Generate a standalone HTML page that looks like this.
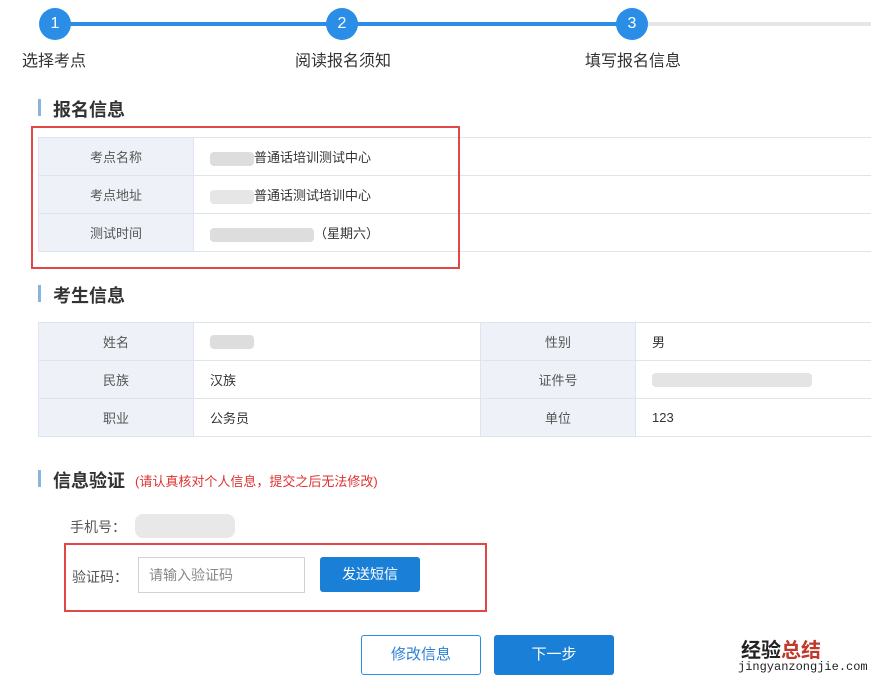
<!DOCTYPE html><html><head><meta charset="utf-8"><style>
body{margin:0;width:871px;height:685px;background:#fff;position:relative;overflow:hidden;font-family:"Liberation Sans","Noto Sans CJK SC",sans-serif;color:#333}
.a{position:absolute}
.c{position:absolute;width:32px;height:32px;border-radius:50%;background:#2b8ee6;color:#fff;font-size:16px;text-align:center;line-height:32px;top:8px}
.sl{position:absolute;top:47px;font-size:16px;color:#333}
.h{position:absolute;left:53px;font-size:18px;font-weight:bold;color:#333}
.bar{position:absolute;left:38px;width:3px;height:17px;background:#8ab4e0}
table{position:absolute;border-collapse:collapse;font-size:13px;left:38px}
td{border:1px solid #dde4ee;height:37px;padding:0}
td.l{background:#eef2f8;text-align:center;width:154px;color:#555}
td.v{padding-left:16px}
.bl{display:inline-block;background:#ddd;border-radius:4px;vertical-align:middle;height:14px}
.red{position:absolute;border:2px solid #e04848}
.btn{position:absolute;font-size:15px;text-align:center;border-radius:3px}
</style></head><body>
<div class="a" style="left:55px;top:22px;width:577px;height:4px;background:#2b8ee6"></div>
<div class="a" style="left:632px;top:22px;width:239px;height:4px;background:#e6e6e6"></div>
<div class="c" style="left:39px">1</div><div class="c" style="left:326px">2</div><div class="c" style="left:616px">3</div>
<div class="sl" style="left:22px">选择考点</div><div class="sl" style="left:295px">阅读报名须知</div><div class="sl" style="left:585px">填写报名信息</div>

<div class="bar" style="top:99px"></div><div class="h" style="top:96px">报名信息</div>
<table style="top:137px;width:840px">
<tr><td class="l">考点名称</td><td class="v"><span class="bl" style="width:44px"></span>普通话培训测试中心</td></tr>
<tr><td class="l">考点地址</td><td class="v"><span class="bl" style="width:44px;background:#e6e6e6"></span>普通话测试培训中心</td></tr>
<tr><td class="l">测试时间</td><td class="v"><span class="bl" style="width:104px"></span>（星期六）</td></tr>
</table>
<div class="red" style="left:31px;top:126px;width:425px;height:139px"></div>

<div class="bar" style="top:285px"></div><div class="h" style="top:282px">考生信息</div>
<table style="top:322px;width:840px">
<tr><td class="l">姓名</td><td class="v" style="width:270px"><span class="bl" style="width:44px"></span></td><td class="l">性别</td><td class="v">男</td></tr>
<tr><td class="l">民族</td><td class="v">汉族</td><td class="l">证件号</td><td class="v"><span class="bl" style="width:160px;background:#e4e4e4"></span></td></tr>
<tr><td class="l">职业</td><td class="v">公务员</td><td class="l">单位</td><td class="v">123</td></tr>
</table>

<div class="bar" style="top:470px"></div><div class="h" style="top:467px">信息验证</div>
<div class="a" style="left:135px;top:471px;font-size:13px;color:#e03030">(请认真核对个人信息，提交之后无法修改)</div>
<div class="a" style="left:70px;top:517px;font-size:14px;color:#555">手机号：</div>
<div class="a" style="left:135px;top:514px;width:100px;height:24px;background:#e8e8e8;border-radius:8px"></div>
<div class="red" style="left:64px;top:543px;width:419px;height:65px"></div>
<div class="a" style="left:72px;top:567px;font-size:14px;color:#555">验证码：</div>
<div class="a" style="left:138px;top:557px;width:165px;height:34px;border:1px solid #ccd3dd;font-size:14px;color:#888;line-height:34px;text-indent:10px">请输入验证码</div>
<div class="btn" style="left:320px;top:557px;width:100px;height:35px;line-height:35px;background:#1a7fd6;color:#fff;font-size:14px">发送短信</div>
<div class="btn" style="left:361px;top:635px;width:118px;height:38px;line-height:38px;border:1px solid #2b8ee6;color:#2b7fd6">修改信息</div>
<div class="btn" style="left:494px;top:635px;width:120px;height:40px;line-height:40px;background:#1a7fd6;color:#fff">下一步</div>
<div class="a" style="left:741px;top:634px;font-size:20px;font-weight:bold;color:#222">经验<span style="color:#c0392b">总结</span></div>
<div class="a" style="left:738px;top:660px;font-size:12px;color:#222;font-family:'Liberation Mono',monospace">jingyanzongjie.com</div>
</body></html>
